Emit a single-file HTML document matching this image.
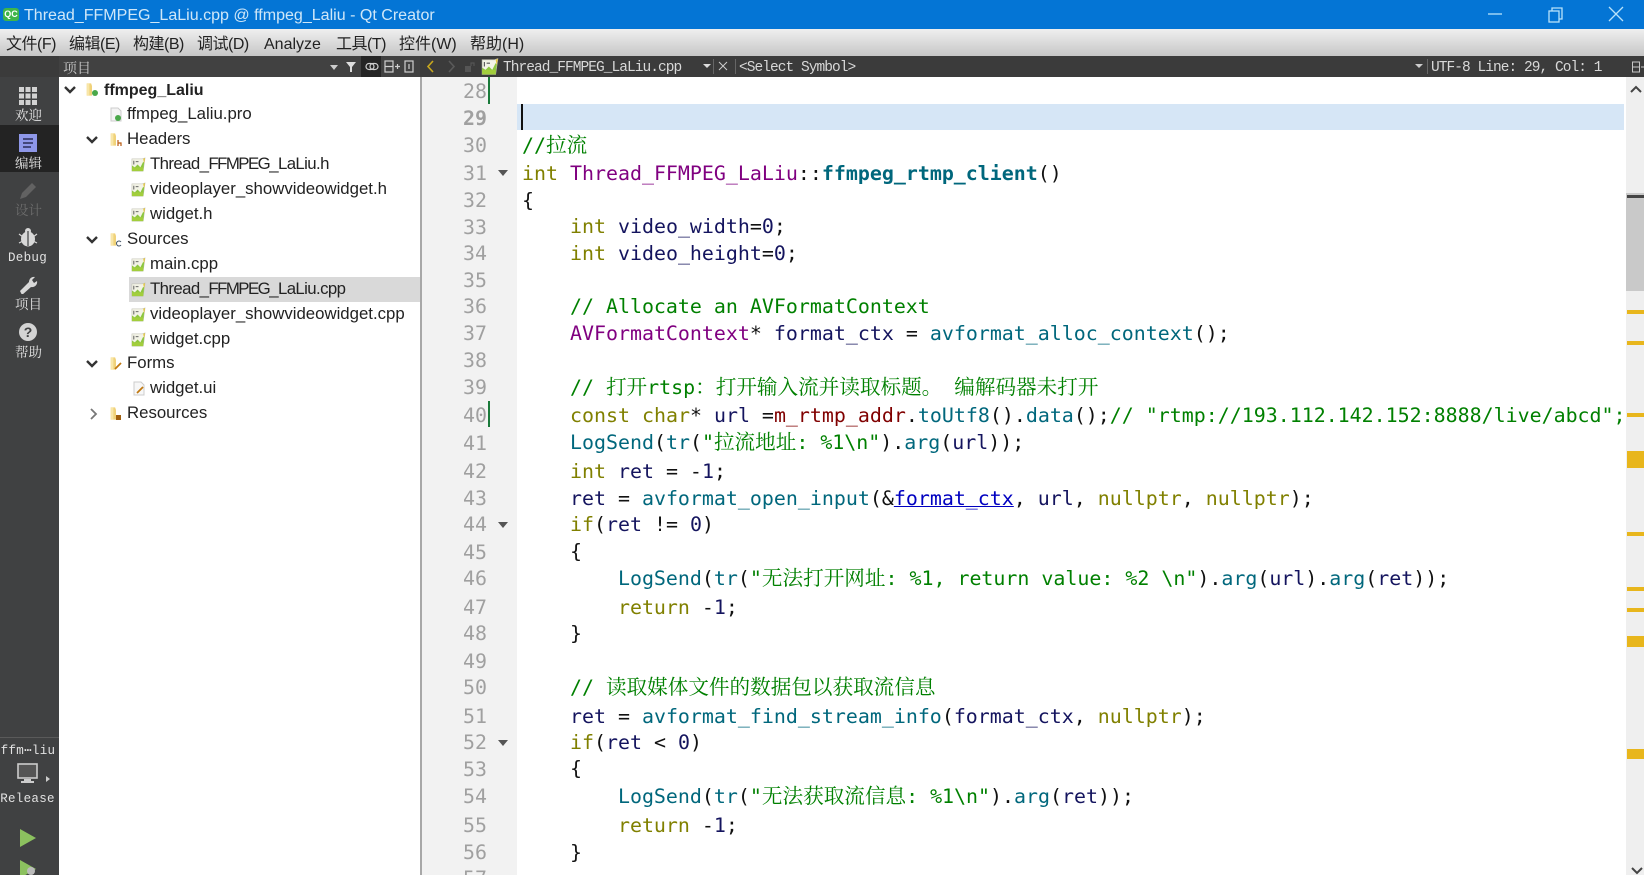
<!DOCTYPE html>
<html><head><meta charset="utf-8"><title>Qt Creator</title>
<style>
html,body{margin:0;padding:0;width:1644px;height:875px;overflow:hidden;background:#fff}
#r{position:relative;width:1644px;height:875px;overflow:hidden;filter:blur(.35px);font-family:"Liberation Sans","Noto Sans CJK SC",sans-serif}
#r div,#r svg{position:absolute}
#r .i{white-space:pre}
.m{top:34px;font-size:16px;line-height:22px;color:#222;white-space:pre}
.ms{letter-spacing:-.5px}
.tb{font-family:"Liberation Mono","Noto Serif CJK SC",monospace;font-size:14.500px;letter-spacing:-.95px;color:#d8d8d8;top:57.500px;line-height:21px;white-space:pre}
.sl{left:0;width:56px;text-align:center;font-family:"Noto Serif CJK SC",serif;font-size:13.500px;line-height:18px;color:#e2e2e2;white-space:pre}
.sm{font-family:"Liberation Mono",monospace;font-size:12.500px;letter-spacing:.3px}
.tr{font-size:16.800px;line-height:24px;color:#222;white-space:pre}
.th{letter-spacing:-.6px}
.th span{letter-spacing:-1.500px}
.n{left:422px;width:65px;text-align:right;font-family:"DejaVu Sans Mono",monospace;font-size:19.900px;line-height:26px;color:#a0a0a0;margin-top:1px}
.c{left:522px;font-family:"DejaVu Sans Mono","Noto Serif CJK SC",monospace;font-size:19.930px;line-height:26px;color:#111;white-space:pre;margin-top:.5px}
.k{color:#808000}.t{color:#800080}.v{color:#14145e}.f{color:#00677c}.s,.g{color:#008000}.e{color:#800000}
.u{color:#0000c0;text-decoration:underline}
.b{font-weight:bold}
.z{font-family:"Noto Serif CJK SC",serif;font-size:20.600px;line-height:0}
.y{left:1627px;width:17px;background:#e8b61c}
</style></head><body>
<div id="r">
<svg width="0" height="0" style="position:absolute"><defs>
<symbol id="fi" viewBox="0 0 16 16"><path d="M1 2h11l3-1-2 14H1z" fill="#f3f3e6" stroke="#bdbdb0" stroke-width=".6"/><path d="M1 15V9l3 2 3-3 3 3 3-6 1 1-1 9z" fill="#8cc63f"/><path d="M1 11h12v4H1z" fill="#a7cf3c" opacity=".8"/><path d="M3 4v4M5 5h3" stroke="#555" stroke-width="1"/><path d="M13 2l2-1-1 6z" fill="#e8c840"/></symbol>
<symbol id="fo" viewBox="0 0 16 16"><path d="M2 1h5l1 3v11H2z" fill="#f0d27a"/><path d="M2 1h3v14H2z" fill="#f8e6a8"/></symbol>
<symbol id="ch" viewBox="0 0 14 14"><path d="M2 4l5 5 5-5" fill="none" stroke="#333" stroke-width="2.400"/></symbol>
</defs></svg>

<!-- title bar -->
<div style="left:0;top:0;width:1644px;height:29px;background:#0475d5"></div>
<div style="left:3px;top:8px;width:16px;height:13px;background:#3fb54a;border-radius:3px;color:#fff;font:bold 9px/13px 'Liberation Sans';text-align:center">QC</div>
<div class="i" style="left:24px;top:4px;font-size:16.050px;line-height:23px;color:#cfe7f8">Thread_FFMPEG_LaLiu.cpp @ ffmpeg_Laliu - Qt Creator</div>
<svg style="left:1480px;top:5px" width="150" height="20" fill="none" stroke="#b8e2fa" stroke-width="1.300"><path d="M8 9h14"/><rect x="69" y="6" width="10" height="11"/><path d="M72 6V3h10v11h-3"/><path d="M129 2l14 14M143 2l-14 14"/></svg>

<!-- menu -->
<div style="left:0;top:29px;width:1644px;height:27px;background:linear-gradient(#efefef,#c6c6c6)"></div>
<div class="m ms" style="left:6px">文件(F)</div>
<div class="m ms" style="left:69px">编辑(E)</div>
<div class="m ms" style="left:133px">构建(B)</div>
<div class="m ms" style="left:197px">调试(D)</div>
<div class="m" style="left:264px">Analyze</div>
<div class="m ms" style="left:336px">工具(T)</div>
<div class="m" style="left:399px">控件(W)</div>
<div class="m" style="left:470px">帮助(H)</div>

<!-- dark toolbar -->
<div style="left:0;top:56px;width:1644px;height:21px;background:#3b3b3b"></div>
<div style="left:59px;top:56px;width:361px;height:21px;background:#414141"></div>
<div class="tb" style="left:63px;font-family:'Noto Serif CJK SC',serif;font-size:14px;letter-spacing:0;color:#c8c8c8">项目</div>
<div style="left:361px;top:56px;width:20px;height:21px;background:#252525"></div>
<svg style="left:325px;top:56px" width="180" height="21" fill="none" stroke="#cfcfcf" stroke-width="1.200">
<path d="M5 9h8l-4 5z" fill="#ccc" stroke="none"/>
<path d="M21 6h10l-4 5v5h-2v-5z" fill="#ddd" stroke="none"/>
<rect x="41" y="7.500" width="8" height="6" rx="3"/><rect x="45" y="7.500" width="8" height="6" rx="3"/>
<rect x="60" y="5" width="8" height="11"/><path d="M60 10.500h8M70 10.500h5M72.500 8v5"/>
<rect x="80" y="5" width="8" height="11"/><path d="M84 8v5"/>
<path d="M108 5l-5 5.500 5 5.500" stroke="#c8a81e" stroke-width="1.600"/>
<path d="M124 5l5 5.500-5 5.500" stroke="#5a5a5a" stroke-width="1.600"/>
<rect x="140" y="10" width="6" height="6" fill="#555" stroke="none"/><path d="M146 10V7h3v3" stroke="#555"/>
</svg>
<svg style="left:481px;top:56px" width="18" height="21"><use href="#fi" x="0" y="1" width="18" height="19"/></svg>
<div class="tb" style="left:503px">Thread_FFMPEG_LaLiu.cpp</div>
<svg style="left:700px;top:56px" width="44" height="21" fill="none" stroke="#bbb"><path d="M3 8h8l-4 4z" fill="#ddd" stroke="none"/><path d="M13.500 3v15M35.500 3v15" stroke="#666"/><path d="M19 6l8 8M27 6l-8 8" stroke="#ccc"/></svg>
<div class="tb" style="left:739px">&lt;Select Symbol&gt;</div>
<svg style="left:1412px;top:56px" width="20" height="21"><path d="M3 8h8l-4 4z" fill="#ccc"/><path d="M15.500 3v15" stroke="#666"/></svg>
<div class="tb" style="left:1431px">UTF-8 Line: 29, Col: 1</div>
<svg style="left:1630px;top:56px" width="14" height="21" fill="none" stroke="#c8c8c8"><rect x="2.500" y="6" width="7" height="10"/><path d="M2.500 11h7M11 11h3"/></svg>

<!-- sidebar -->
<div style="left:0;top:77px;width:59px;height:798px;background:#404142"></div>
<div style="left:0;top:125px;width:59px;height:47px;background:#232323"></div>
<svg style="left:19px;top:87px" width="18" height="18" fill="#d2d2d2"><rect x="0" y="0" width="5" height="5"/><rect x="6.500" y="0" width="5" height="5"/><rect x="13" y="0" width="5" height="5"/><rect x="0" y="6.500" width="5" height="5"/><rect x="6.500" y="6.500" width="5" height="5"/><rect x="13" y="6.500" width="5" height="5"/><rect x="0" y="13" width="5" height="5"/><rect x="6.500" y="13" width="5" height="5"/><rect x="13" y="13" width="5" height="5"/></svg>
<div class="sl" style="top:105px;width:57px">欢迎</div>
<svg style="left:19px;top:134px" width="18" height="18"><rect width="18" height="18" fill="#8e97e8"/><path d="M4 5h10M4 9h10M4 13h8" stroke="#2a2d55" stroke-width="1.500"/></svg>
<div class="sl" style="top:153px;width:57px">编辑</div>
<svg style="left:18px;top:181px" width="20" height="20"><path d="M2 18l2-6L14 2l4 4L8 16z" fill="#626262"/></svg>
<div class="sl" style="top:200px;width:57px;color:#6c6c6c">设计</div>
<svg style="left:18px;top:228px" width="20" height="19"><ellipse cx="10" cy="11" rx="7" ry="7.500" fill="#d8d8d8"/><circle cx="10" cy="3" r="3" fill="#d8d8d8"/><path d="M10 3v15" stroke="#404142" stroke-width="1.200"/><path d="M1 6l4 3M19 6l-4 3M1 15l4-2M19 15l-4-2" stroke="#d8d8d8" stroke-width="1.200"/></svg>
<div class="sl sm" style="top:249px;width:55px">Debug</div>
<svg style="left:18px;top:275px" width="20" height="19"><path d="M2 16l9-9a5 5 0 0 1 6-5l-3 3 2 3 3-2a5 5 0 0 1-6 6l-9 8z" fill="#d8d8d8"/></svg>
<div class="sl" style="top:294px;width:57px">项目</div>
<svg style="left:19px;top:323px" width="18" height="18"><circle cx="9" cy="9" r="9" fill="#d4d4d4"/><text x="9" y="14" font-family="Liberation Sans" font-size="14" font-weight="bold" text-anchor="middle" fill="#404142">?</text></svg>
<div class="sl" style="top:342px;width:57px">帮助</div>
<div style="left:0;top:737px;width:59px;height:1px;background:#5a5a5a"></div>
<div class="sl sm" style="top:742px;width:56px">ffm⋯liu</div>
<svg style="left:17px;top:763px" width="34" height="22"><rect x="1" y="1" width="19" height="14" fill="#555" stroke="#ccc" stroke-width="1.600"/><path d="M7 16h7v2h3v2H4v-2h3z" fill="#ccc"/><path d="M29 13l4 3-4 3z" fill="#ccc"/></svg>
<div class="sl sm" style="top:790px;width:55px">Release</div>
<svg style="left:19px;top:828px" width="18" height="20"><path d="M1 1l16 9-16 9z" fill="#8cc15f"/></svg>
<svg style="left:19px;top:860px" width="20" height="15"><path d="M1 0l16 9-16 9z" fill="#8cc15f"/><circle cx="12" cy="11" r="4" fill="#bbb"/></svg>

<!-- tree -->
<div style="left:129px;top:277px;width:291px;height:25px;background:#d9d9d9"></div>
<div style="left:420px;top:77px;width:2px;height:798px;background:#a8a8a8"></div>
<svg style="left:63px;top:83px" width="14" height="14"><use href="#ch"/></svg>
<svg style="left:85px;top:133px" width="14" height="14"><use href="#ch"/></svg>
<svg style="left:85px;top:233px" width="14" height="14"><use href="#ch"/></svg>
<svg style="left:85px;top:357px" width="14" height="14"><use href="#ch"/></svg>
<svg style="left:87px;top:407px" width="14" height="14"><path d="M4 2l5 5-5 5" fill="none" stroke="#777" stroke-width="1.800"/></svg>

<svg style="left:85px;top:82px" width="14" height="15"><use href="#fo"/><circle cx="10" cy="11" r="3" fill="#4aa84a"/></svg>
<svg style="left:109px;top:107px" width="14" height="15"><path d="M2 1h7l3 3v10H2z" fill="#f4f4f4" stroke="#ccc"/><circle cx="9" cy="11" r="3" fill="#4aa84a"/></svg>
<svg style="left:109px;top:132px" width="14" height="15"><use href="#fo"/><path d="M9 8v6M9 11h3v3" stroke="#b85a10" stroke-width="1.200" fill="none"/></svg>
<svg style="left:109px;top:232px" width="14" height="15"><use href="#fo"/><path d="M12 10a2.500 2.500 0 1 0 0 3" stroke="#456" fill="none"/></svg>
<svg style="left:109px;top:356px" width="14" height="15"><use href="#fo"/><path d="M6 13l6-6" stroke="#c07810" stroke-width="1.800"/></svg>
<svg style="left:109px;top:406px" width="14" height="15"><use href="#fo"/><rect x="7" y="9" width="5" height="5" fill="#a06010"/></svg>

<svg style="left:131px;top:157px" width="15" height="15"><use href="#fi"/></svg>
<svg style="left:131px;top:182px" width="15" height="15"><use href="#fi"/></svg>
<svg style="left:131px;top:207px" width="15" height="15"><use href="#fi"/></svg>
<svg style="left:131px;top:257px" width="15" height="15"><use href="#fi"/></svg>
<svg style="left:131px;top:282px" width="15" height="15"><use href="#fi"/></svg>
<svg style="left:131px;top:307px" width="15" height="15"><use href="#fi"/></svg>
<svg style="left:131px;top:332px" width="15" height="15"><use href="#fi"/></svg>
<svg style="left:132px;top:381px" width="14" height="15"><path d="M2 1h7l3 3v10H2z" fill="#f7f7f7" stroke="#ccc"/><path d="M5 12l6-6" stroke="#c07810" stroke-width="1.800"/></svg>

<div class="tr b" style="left:104px;top:78.500px;font-size:16px">ffmpeg_Laliu</div>
<div class="tr" style="left:127px;top:102px">ffmpeg_Laliu.pro</div>
<div class="tr" style="left:127px;top:127px">Headers</div>
<div class="tr th" style="left:150px;top:152px">Thread_<span>FFMPEG</span>_LaLiu.h</div>
<div class="tr" style="left:150px;top:177px">videoplayer_showvideowidget.h</div>
<div class="tr" style="left:150px;top:202px">widget.h</div>
<div class="tr" style="left:127px;top:227px">Sources</div>
<div class="tr" style="left:150px;top:252px">main.cpp</div>
<div class="tr th" style="left:150px;top:277px">Thread_<span>FFMPEG</span>_LaLiu.cpp</div>
<div class="tr" style="left:150px;top:302px">videoplayer_showvideowidget.cpp</div>
<div class="tr" style="left:150px;top:327px">widget.cpp</div>
<div class="tr" style="left:127px;top:351px">Forms</div>
<div class="tr" style="left:150px;top:376px">widget.ui</div>
<div class="tr" style="left:127px;top:401px">Resources</div>

<!-- editor chrome -->
<div style="left:422px;top:77px;width:95px;height:798px;background:#f2f2f2"></div>
<div style="left:517px;top:104px;width:1107px;height:26px;background:#d6e6f6"></div>
<div style="left:521px;top:104px;width:2px;height:26px;background:#111"></div>
<div style="left:488px;top:77px;width:2px;height:27px;background:#1a7a3a"></div>
<div style="left:488px;top:401px;width:2px;height:26px;background:#1a7a3a"></div>
<svg style="left:497px;top:169px" width="12" height="8"><path d="M1 1h10l-5 6z" fill="#555"/></svg>
<svg style="left:497px;top:521px" width="12" height="8"><path d="M1 1h10l-5 6z" fill="#555"/></svg>
<svg style="left:497px;top:739px" width="12" height="8"><path d="M1 1h10l-5 6z" fill="#555"/></svg>

<!-- scrollbar -->
<div style="left:1626px;top:77px;width:18px;height:798px;background:#efefef"></div>
<div style="left:1626px;top:193px;width:18px;height:98px;background:#c9c9c9"></div>
<div style="left:1627px;top:195px;width:17px;height:3px;background:#444"></div>
<svg style="left:1630px;top:85px" width="12" height="9"><path d="M1 7l5-5 5 5" fill="none" stroke="#444" stroke-width="2"/></svg>
<svg style="left:1631px;top:866px" width="12" height="9"><path d="M1 2l5 5 5-5" fill="none" stroke="#444" stroke-width="2"/></svg>
<div class="y" style="top:310px;height:4px"></div>
<div class="y" style="top:341px;height:4px"></div>
<div class="y" style="top:413px;height:4px"></div>
<div class="y" style="top:451px;height:17px"></div>
<div class="y" style="top:532px;height:4px"></div>
<div class="y" style="top:587px;height:4px"></div>
<div class="y" style="top:608px;height:4px"></div>
<div class="y" style="top:636px;height:11px"></div>
<div class="y" style="top:749px;height:10px"></div>

<!-- line numbers -->
<div class="n" style="top:78px">28</div>
<div class="n b" style="top:104.500px">29</div>
<div class="n" style="top:132px">30</div>
<div class="n" style="top:160px">31</div>
<div class="n" style="top:187px">32</div>
<div class="n" style="top:213.500px">33</div>
<div class="n" style="top:240px">34</div>
<div class="n" style="top:267px">35</div>
<div class="n" style="top:293px">36</div>
<div class="n" style="top:320px">37</div>
<div class="n" style="top:346.500px">38</div>
<div class="n" style="top:374px">39</div>
<div class="n" style="top:402px">40</div>
<div class="n" style="top:429.500px">41</div>
<div class="n" style="top:458px">42</div>
<div class="n" style="top:485px">43</div>
<div class="n" style="top:511px">44</div>
<div class="n" style="top:538.500px">45</div>
<div class="n" style="top:565px">46</div>
<div class="n" style="top:594px">47</div>
<div class="n" style="top:620px">48</div>
<div class="n" style="top:647.500px">49</div>
<div class="n" style="top:674px">50</div>
<div class="n" style="top:703px">51</div>
<div class="n" style="top:729px">52</div>
<div class="n" style="top:755.500px">53</div>
<div class="n" style="top:783px">54</div>
<div class="n" style="top:812px">55</div>
<div class="n" style="top:839px">56</div>
<div class="n" style="top:865px">57</div>

<!-- code -->
<div class="c g" style="top:132px">//<span class="z">拉流</span></div>
<div class="c" style="top:160px"><span class="k">int</span> <span class="t">Thread_FFMPEG_LaLiu</span>::<span class="f b">ffmpeg_rtmp_client</span>()</div>
<div class="c" style="top:187px">{</div>
<div class="c" style="top:213.500px">    <span class="k">int</span> <span class="v">video_width</span>=<span class="v">0</span>;</div>
<div class="c" style="top:240px">    <span class="k">int</span> <span class="v">video_height</span>=<span class="v">0</span>;</div>
<div class="c g" style="top:293px">    // Allocate an AVFormatContext</div>
<div class="c" style="top:320px">    <span class="t">AVFormatContext</span>* <span class="v">format_ctx</span> = <span class="f">avformat_alloc_context</span>();</div>
<div class="c g" style="top:374px">    // <span class="z">打开</span>rtsp<span class="z">：打开输入流并读取标题。</span> <span class="z">编解码器未打开</span></div>
<div class="c" style="top:402px">    <span class="k">const</span> <span class="k">char</span>* <span class="v">url</span> =<span class="e">m_rtmp_addr</span>.<span class="f">toUtf8</span>().<span class="f">data</span>();<span class="g">// "rtmp://193.112.142.152:8888/live/abcd";</span></div>
<div class="c" style="top:429.500px">    <span class="f">LogSend</span>(<span class="f">tr</span>(<span class="s">"<span class="z">拉流地址</span>: %1\n"</span>).<span class="f">arg</span>(<span class="v">url</span>));</div>
<div class="c" style="top:458px">    <span class="k">int</span> <span class="v">ret</span> = -<span class="v">1</span>;</div>
<div class="c" style="top:485px">    <span class="v">ret</span> = <span class="f">avformat_open_input</span>(&amp;<span class="u">format_ctx</span>, <span class="v">url</span>, <span class="k">nullptr</span>, <span class="k">nullptr</span>);</div>
<div class="c" style="top:511px">    <span class="k">if</span>(<span class="v">ret</span> != <span class="v">0</span>)</div>
<div class="c" style="top:538.500px">    {</div>
<div class="c" style="top:565px">        <span class="f">LogSend</span>(<span class="f">tr</span>(<span class="s">"<span class="z">无法打开网址</span>: %1, return value: %2 \n"</span>).<span class="f">arg</span>(<span class="v">url</span>).<span class="f">arg</span>(<span class="v">ret</span>));</div>
<div class="c" style="top:594px">        <span class="k">return</span> -<span class="v">1</span>;</div>
<div class="c" style="top:620px">    }</div>
<div class="c g" style="top:674px">    // <span class="z">读取媒体文件的数据包以获取流信息</span></div>
<div class="c" style="top:703px">    <span class="v">ret</span> = <span class="f">avformat_find_stream_info</span>(<span class="v">format_ctx</span>, <span class="k">nullptr</span>);</div>
<div class="c" style="top:729px">    <span class="k">if</span>(<span class="v">ret</span> &lt; <span class="v">0</span>)</div>
<div class="c" style="top:755.500px">    {</div>
<div class="c" style="top:783px">        <span class="f">LogSend</span>(<span class="f">tr</span>(<span class="s">"<span class="z">无法获取流信息</span>: %1\n"</span>).<span class="f">arg</span>(<span class="v">ret</span>));</div>
<div class="c" style="top:812px">        <span class="k">return</span> -<span class="v">1</span>;</div>
<div class="c" style="top:839px">    }</div>
</div>
</body></html>
